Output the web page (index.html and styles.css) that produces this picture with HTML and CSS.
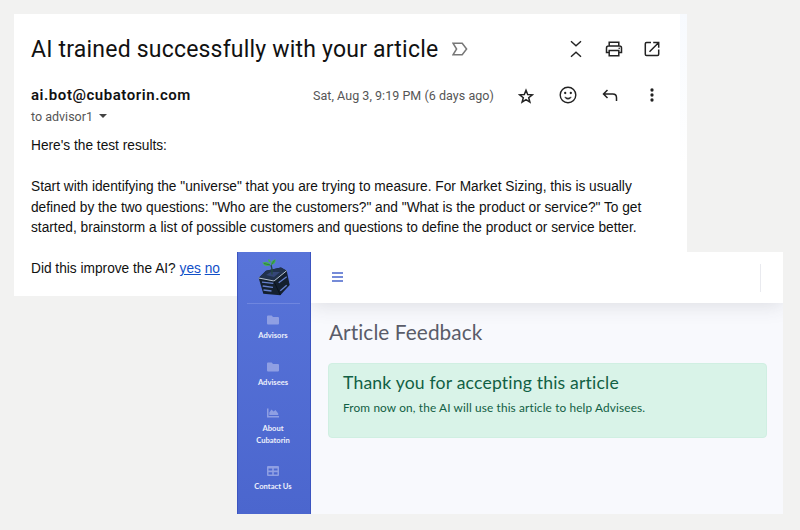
FILE: index.html
```html
<!DOCTYPE html>
<html lang="en">
<head>
<meta charset="utf-8">
<title>Article feedback</title>
<link rel="stylesheet" href="styles.css">
</head>
<body>
<main class="stage">
  <article class="mail">
    <header class="mail-head">
      <h1 class="subject">AI trained successfully with your article</h1>
      <svg class="tag" width="16" height="14" viewBox="0 0 16 14"><path d="M1 1.200h9.200L14.600 7l-4.400 5.800H1L4.600 7z" fill="none" stroke="#777" stroke-width="1.500"/></svg>
      <div class="head-tools">
        <svg width="12" height="18" viewBox="0 0 12 18"><path d="M1 1.200l5 4.600 5-4.600M1 16.800l5-4.600 5 4.600" fill="none" stroke="#222" stroke-width="1.400"/></svg>
        <svg width="18" height="16" viewBox="0 0 18 16"><path d="M4.200 5V1.200h9.600V5M4.200 11.500H1.500V7q0-2 2-2h11q2 0 2 2v4.500h-2.700M4.200 9.500h9.600v5.300H4.200z" fill="none" stroke="#222" stroke-width="1.500"/><circle cx="14.200" cy="7.300" r=".8" fill="#222"/></svg>
        <svg width="16" height="16" viewBox="0 0 16 16"><path d="M7 1.500H2.500q-1.200 0-1.200 1.200v10.600q0 1.200 1.200 1.200h11q1.200 0 1.200-1.200V8.500M9.200 1.500h5.500v5.200M14.500 1.700L5.500 10.700" fill="none" stroke="#222" stroke-width="1.500"/></svg>
      </div>
    </header>
    <div class="sender-row">
      <strong class="sender">ai.bot@cubatorin.com</strong>
      <span class="date">Sat, Aug 3, 9:19 PM (6 days ago)</span>
      <svg class="star" width="16" height="16" viewBox="0 0 16 16"><path d="M8 2.200l1.700 4.300 4.600.3-3.600 2.900 1.200 4.500L8 11.700l-3.900 2.500 1.200-4.500L1.700 6.800l4.600-.3z" fill="none" stroke="#222" stroke-width="1.500"/></svg>
      <svg class="smile" width="18" height="18" viewBox="0 0 18 18"><circle cx="9" cy="9" r="7.800" fill="none" stroke="#222" stroke-width="1.400"/><circle cx="6.200" cy="7" r="1.150" fill="#222"/><circle cx="11.800" cy="7" r="1.150" fill="#222"/><path d="M5.800 11q3.200 2.300 6.400 0-.8 2.200-3.200 2.200T5.800 11z" fill="#222" stroke="#222" stroke-width=".6"/></svg>
      <svg class="reply" width="16" height="13" viewBox="0 0 16 13"><path d="M5.500 1L1.500 5l4 4M1.500 5h9.300q3.700 0 3.700 3.700V12" fill="none" stroke="#222" stroke-width="1.500"/></svg>
      <svg class="more" width="4" height="14" viewBox="0 0 4 14"><g fill="#222"><circle cx="2" cy="2" r="1.650"/><circle cx="2" cy="7" r="1.650"/><circle cx="2" cy="12" r="1.650"/></g></svg>
    </div>
    <div class="recipient"><span>to advisor1</span><i class="caret"></i></div>
    <div class="mail-body">
      <p>Here's the test results:</p>
      <p>Start with identifying the "universe" that you are trying to measure. For Market Sizing, this is usually<br>defined by the two questions: "Who are the customers?" and "What is the product or service?" To get<br>started, brainstorm a list of possible customers and questions to define the product or service better.</p>
      <p>Did this improve the AI? <a href="#">yes</a> <a href="#">no</a></p>
    </div>
  </article>

  <section class="app">
    <nav class="sidebar">
      <svg class="logo" width="34" height="40" viewBox="0 0 34 40">
        <path d="M.7 21L8 13.700 23 10.500l5.700 3.200 3 14.300-9.400 10.300-17-1.600z" fill="#14202f"/>
        <path d="M.7 21L8 13.700 23 10.500l5.700 3.200L16 24z" fill="#22324c"/>
        <path d="M8 18l5-3 9 0-6 5z" fill="#354778"/>
        <path d="M.7 21L16 24l12.700-10.300" fill="none" stroke="#b9c4d2" stroke-width="1"/>
        <path d="M16 24.500l6.300 13.500" stroke="#0a121e" stroke-width="1"/>
        <path d="M4 25.200l11.300 1.100M4.700 29l10.300 1.300M5.500 33l8 1M20.700 25.700l8-6M22.300 33.700l6.400-5.400" stroke="#6680cc" stroke-width="1.300"/>
        <path d="M14 17.500q.5-6-1-9.500" fill="none" stroke="#254a42" stroke-width="1.400"/>
        <path d="M12.500 8Q7 11 4.300 5.500q6-2 8.200 2.500zM13 8q-.5-4.500 4.500-5.800Q18.500 7 13 8zM12.500 5.500Q9.500 5 10.500 2q2.500 1 2 3.500z" fill="#45b052"/>
        <path d="M6 6.500l6 1.500M13.500 7.500l3-4" stroke="#236b42" stroke-width=".8"/>
      </svg>
      <hr class="rule">
      <a class="item"><svg width="12" height="10" viewBox="0 0 12 10"><path d="M1 .5h3.700L6 2h5q1 0 1 1v5.500q0 1-1 1H1q-1 0-1-1v-7q0-1 1-1z"/></svg><span>Advisors</span></a>
      <a class="item"><svg width="12" height="10" viewBox="0 0 12 10"><path d="M1 .5h3.700L6 2h5q1 0 1 1v5.500q0 1-1 1H1q-1 0-1-1v-7q0-1 1-1z"/></svg><span>Advisees</span></a>
      <a class="item"><svg width="12" height="10" viewBox="0 0 12 10"><path d="M0 .5h1.500V8H12v1.500H0zM2.300 7V4.500L4.500 1.500l2 2L8.500 2 11.200 5.500V7z"/></svg><span>About<br>Cubatorin</span></a>
      <a class="item"><svg width="12" height="10" viewBox="0 0 12 10"><path fill-rule="evenodd" d="M1 0h10q1 0 1 1v8q0 1-1 1H1q-1 0-1-1V1q0-1 1-1zM1.500 2.500v2h3.700v-2zM6.800 2.500v2h3.700v-2zM1.500 6.200v2.200h3.700V6.200zM6.800 6.200v2.200h3.700V6.200z"/></svg><span>Contact Us</span></a>
    </nav>
    <div class="main">
      <div class="topbar">
        <svg width="11" height="10" viewBox="0 0 11 10"><path d="M0 1h11M0 5h11M0 9h11" stroke="#4866cc" stroke-width="1.600"/></svg>
        <i class="divider"></i>
      </div>
      <div class="content">
        <h2>Article Feedback</h2>
        <div class="alert">
          <h3>Thank you for accepting this article</h3>
          <p>From now on, the AI will use this article to help Advisees.</p>
        </div>
      </div>
    </div>
  </section>
</main>
</body>
</html>
```
FILE: styles.css
```css
* { box-sizing: border-box; }
body { margin: 0; background: #f2f2f1; }
h1, h2, h3, p { margin: 0; font-weight: 400; }
svg { display: block; flex: none; }

.stage { position: relative; width: 800px; height: 530px; padding: 14px; overflow: hidden; }

.mail {
  width: 673px;
  height: 282px;
  padding: 18px 27px 0 17px;
  color: #111;
  background: linear-gradient(#f7fafe, #fff 150px) right / 7px 100% no-repeat, #fff;
  font-family: Roboto, "Liberation Sans", sans-serif;
}
.mail-head { display: flex; align-items: center; height: 34px; }
.subject { width: 407px; padding-top: 2px; font-size: 23px; line-height: 34px; letter-spacing: 0.2px; white-space: nowrap; }
.tag { margin-left: 14px; }
.head-tools { display: flex; align-items: center; gap: 22px; margin-left: auto; }
.head-tools svg:nth-child(2) { margin: 0 -1px 0 1px; }
.sender-row { display: flex; align-items: center; height: 24px; margin-top: 17px; }
.sender { width: 160px; font-size: 15px; font-weight: 600; letter-spacing: 0.55px; white-space: nowrap; }
.date { width: 182px; margin-left: 122px; color: #555; font-size: 12.5px; letter-spacing: 0.04px; white-space: nowrap; }
.star { margin: 1px 0 0 22.5px; }
.smile { margin-left: 25.5px; }
.reply { margin-left: 25px; }
.more { margin-left: 32px; }
.recipient { display: flex; align-items: center; height: 18px; color: #555; font-size: 12.5px; }
.caret { margin-left: 6px; border: 4px solid transparent; border-top-color: #444; border-bottom: 0; }
.mail-body { margin-top: 11px; font: 13.71px/20.5px "Liberation Sans", Arial, sans-serif; white-space: nowrap; }
.mail-body p + p { margin-top: 20.5px; }
.mail-body a { color: #1150c8; }

.app {
  position: absolute;
  left: 237px;
  top: 252px;
  display: flex;
  width: 546px;
  height: 262px;
  font-family: Lato, "Noto Sans", sans-serif;
  font-variant-ligatures: none;
}
.sidebar {
  display: flex;
  flex-direction: column;
  align-items: center;
  width: 74px;
  padding-right: 2px;
  border: solid #3c55c0;
  border-width: 0 1px;
  background: linear-gradient(#5874d9, #4b66ce);
  color: #edf0fb;
  font-size: 7.6px;
  font-weight: 700;
  line-height: 11.5px;
  text-align: center;
}
.logo { margin: 5px 0 0 3px; }
.rule { width: 53px; height: 1px; margin: 6px 0 11px; border: 0; background: #6f86df; }
.item { display: flex; flex-direction: column; align-items: center; gap: 5px; margin-bottom: 20px; }
.item svg { fill: #8f9fe3; }
.main { flex: 1; background: #f8f9fd; }
.topbar {
  display: flex;
  align-items: center;
  justify-content: space-between;
  height: 51px;
  padding: 0 22px 0 20.5px;
  background: #fff;
  box-shadow: 0 2px 20px rgba(58, 59, 69, 0.15);
  clip-path: inset(0 0 -30px 0);
}
.topbar svg { margin-top: -2px; }
.divider { width: 1px; height: 28px; background: #e9eaef; }
.content { padding: 14px 16px 0 17px; }
.content h2 { padding-left: 1px; color: #5a5c69; font-size: 20.8px; line-height: 30px; letter-spacing: 0.08px; white-space: nowrap; }
.alert {
  height: 75px;
  margin-top: 16px;
  padding: 8px 14px;
  border: 1px solid #d0efe2;
  border-radius: 4px;
  background: #d9f3e8;
  color: #116044;
  white-space: nowrap;
}
.alert h3 { font-size: 17.6px; line-height: 22px; letter-spacing: 0.18px; }
.alert p { margin-top: 6px; font-size: 11.8px; line-height: 16px; letter-spacing: 0.15px; }
```
